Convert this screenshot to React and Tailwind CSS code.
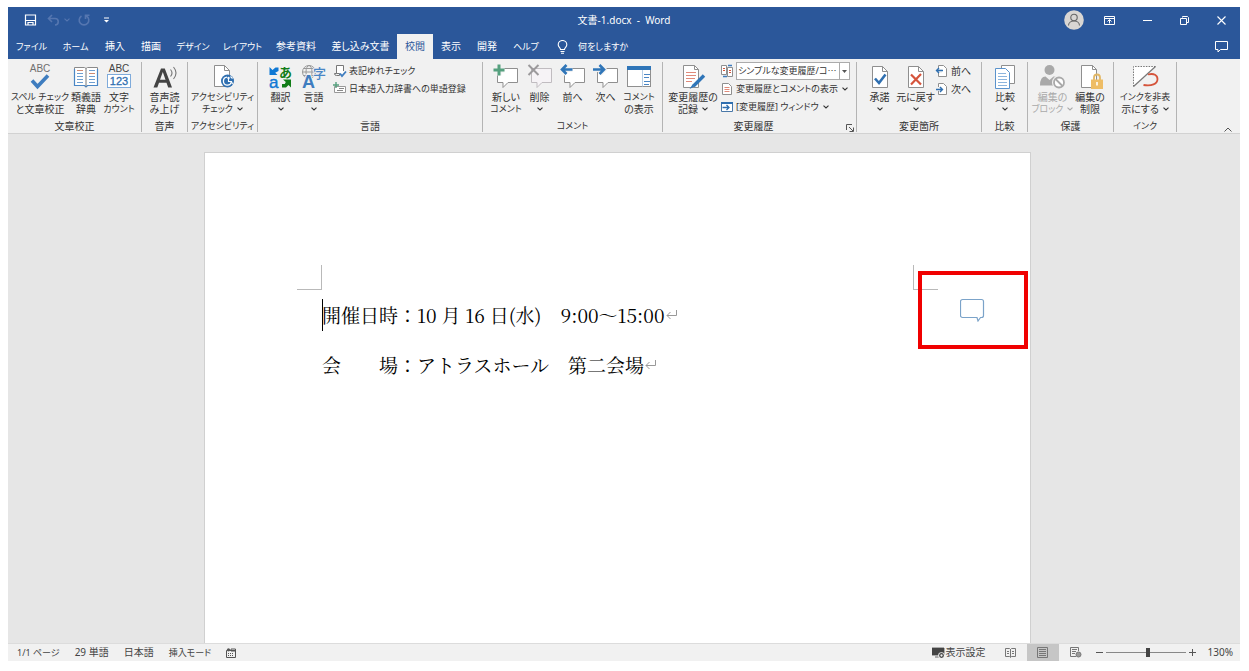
import clsx from 'clsx';

const TABS = [
  { label: 'ファイル', width: 'w-[45px]' },
  { label: 'ホーム', width: 'w-[43px]' },
  { label: '挿入', width: 'w-[36px]' },
  { label: '描画', width: 'w-[36px]' },
  { label: 'デザイン', width: 'w-[48px]' },
  { label: 'レイアウト', width: 'w-[51px]' },
  { label: '参考資料', width: 'w-[56px]' },
  { label: '差し込み文書', width: 'w-[73px]' },
  { label: '校閲', width: 'w-[36px]', active: true },
  { label: '表示', width: 'w-[36px]' },
  { label: '開発', width: 'w-[36px]' },
  { label: 'ヘルプ', width: 'w-[42px]' },
];

const labelSize = text => (/[ァ-ヶ]/.test(text) || text.length > 10 ? 'text-[9px]' : 'text-[10px]');

function Chevron({ className }) {
  return (
    <svg className={clsx('inline-block shrink-0', className)} width="6" height="4" viewBox="0 0 6 4" fill="none" stroke="currentColor" strokeWidth="1.1">
      <path d="M0.5 0.6 3 3 5.5 0.6" />
    </svg>
  );
}

/* ---------- large icons ---------- */

function SpellIcon() {
  return (
    <svg className="overflow-visible font-['Liberation_Sans',sans-serif]" width="24" height="26" viewBox="0 0 24 26">
      <text x="12" y="8" textAnchor="middle" fontSize="10" fill="#6f6f6f">ABC</text>
      <path d="M4 16.500 9.500 22.500 20 11.500" fill="none" stroke="#3f7dbf" strokeWidth="3.600" />
    </svg>
  );
}

function ThesaurusIcon() {
  return (
    <svg width="26" height="24" viewBox="0 0 26 24">
      <path d="M1.500 2.500h10l1.500 1 1.500-1h10v18h-10l-1.500 1.500-1.500-1.500h-10z" fill="#fff" stroke="#8a8a8a" />
      <path d="M1.500 4v16.500h10l1.500 1.500 1.500-1.500h10V4" fill="none" stroke="#4a86c5" strokeWidth="1.200" />
      <path d="M13 3.500v18" stroke="#777" />
      <path d="M4 8.500h6M4 11.500h6M4 14.500h6M4 17.500h6M16 5.500h6M16 11.500h6M16 14.500h6M16 17.500h6" stroke="#6f9fd0" />
      <path d="M4 5.500h6M16 8.500h6" stroke="#d08a70" />
    </svg>
  );
}

function WordCountIcon() {
  return (
    <svg className="overflow-visible font-['Liberation_Sans',sans-serif]" width="26" height="26" viewBox="0 0 26 26">
      <text x="13" y="8" textAnchor="middle" fontSize="10" fill="#444">ABC</text>
      <rect x="1.500" y="10.500" width="23" height="13" fill="#fff" stroke="#7fabdb" />
      <text x="13" y="21" textAnchor="middle" fontSize="11" fill="#2f6fb0" stroke="#2f6fb0" strokeWidth="0.300">123</text>
    </svg>
  );
}

function ReadAloudIcon() {
  return (
    <svg width="28" height="26" viewBox="0 0 28 26">
      <path fillRule="evenodd" d="M2.500 23.500 10 4.500h3.800L21 23.500h-3.800l-1.700-4.800H8L6.300 23.500zM9 15.700h5.500L11.800 8z" fill="#444" />
      <path d="M19.500 5.500q3 3.500 0 7M22.500 3q5 6 0 12" fill="none" stroke="#777" strokeWidth="1.100" />
    </svg>
  );
}

function AccessibilityIcon() {
  return (
    <svg width="24" height="26" viewBox="0 0 24 26">
      <path d="M3.500 1.500h10l5 5v16h-15z" fill="#fff" stroke="#8f8f8f" />
      <path d="M13.500 1.500v5h5" fill="none" stroke="#8f8f8f" />
      <circle cx="16.500" cy="17" r="6.500" fill="#2f6fb0" />
      <path d="M16 13.200a4 4 0 1 0 4.300 5" fill="none" stroke="#fff" strokeWidth="1.300" />
      <circle cx="17.500" cy="14" r="1.200" fill="#fff" />
      <path d="M17.500 15v2.500h3l1 2.500M19.500 12.500l2 2" fill="none" stroke="#fff" strokeWidth="1.100" />
    </svg>
  );
}

function TranslateIcon() {
  return (
    <svg className="overflow-visible" width="24" height="26" viewBox="0 0 24 26">
      <path d="M0.500 3v8h8L6.200 8.700 9.500 7V3.500H6.500L3.500 6z" fill="#0f78d4" />
      <text x="0" y="24" fontSize="17" fill="#0f78d4" className="font-['Liberation_Sans',sans-serif]" stroke="#0f78d4" strokeWidth="0.400">a</text>
      <text x="10" y="12.500" fontSize="13" fontWeight="700" fill="#117d18">あ</text>
      <path d="M14 15.500h8v8L19.500 21 17 23.500h-4V20h2.800l1-2z" fill="#117d18" />
    </svg>
  );
}

function LanguageIcon() {
  return (
    <svg className="overflow-visible" width="26" height="26" viewBox="0 0 26 26">
      <g fill="none" stroke="#999">
        <circle cx="8" cy="8" r="6.500" />
        <ellipse cx="8" cy="8" rx="3" ry="6.500" />
        <path d="M1.500 8h13M2.500 4.500h11M2.500 11.500h11" />
      </g>
      <text x="12" y="14" fontSize="13" fontWeight="500" fill="#4a86c5" stroke="#f1f1f1" strokeWidth="1.500" paintOrder="stroke">字</text>
      <text x="1" y="24" fontSize="18" fontWeight="700" fill="#3f7dbf" stroke="#f1f1f1" strokeWidth="2" paintOrder="stroke" className="font-['Liberation_Sans',sans-serif]">A</text>
    </svg>
  );
}

const BUBBLE = 'M4.500 4.500h20v14H15l-5 5v-5H4.500z';

function CommentIcon({ kind }) {
  const muted = kind === 'delete';
  return (
    <svg width="26" height="26" viewBox="0 0 26 26">
      <path d={BUBBLE} fill={muted ? '#f6f3f6' : '#fff'} stroke={muted ? '#c0bcc0' : '#8f8f8f'} />
      {kind === 'new' && <path d="M6 0.500v11M0.500 6h11" stroke="#f1f1f1" strokeWidth="5" />}
      {kind === 'new' && <path d="M6 0.500v11M0.500 6h11" stroke="#55a07e" strokeWidth="3" />}
      {kind === 'delete' && <path d="M1.500 1 11.500 11M11.500 1 1.500 11" stroke="#9c9a9c" strokeWidth="2" />}
      {kind === 'prev' && <path d="M1 5.500h11.500M6 1 1.500 5.500 6 10" fill="none" stroke="#f1f1f1" strokeWidth="5" />}
      {kind === 'prev' && <path d="M2 5.500h10.500M6.500 1 2 5.500 6.500 10" fill="none" stroke="#2f75b8" strokeWidth="2.600" />}
      {kind === 'next' && <path d="M0 5.500h11M6.500 1 11 5.500 6.500 10" fill="none" stroke="#f1f1f1" strokeWidth="5" />}
      {kind === 'next' && <path d="M0 5.500h11M6.500 1 11 5.500 6.500 10" fill="none" stroke="#2f75b8" strokeWidth="2.600" />}
    </svg>
  );
}

function ShowCommentsIcon() {
  return (
    <svg width="26" height="26" viewBox="0 0 26 26">
      <rect x="1.500" y="2.500" width="23" height="20" fill="#fff" stroke="#8f8f8f" />
      <path d="M1 2h24v4H1z" fill="#2f75b8" />
      <path d="M16.500 6v16.500" stroke="#b8cfe6" />
      <path d="M18 10.500h6M18 13.500h5M18 17.500h6M18 20.500h5" stroke="#4a86c5" />
    </svg>
  );
}

function TrackIcon() {
  return (
    <svg width="26" height="26" viewBox="0 0 26 26">
      <path d="M3.500 1.500h11l4 4v18h-15z" fill="#fff" stroke="#8f8f8f" />
      <path d="M14.500 1.500v4h4" fill="none" stroke="#8f8f8f" />
      <path d="M6 8.500h10M6 11.500h10M6 14.500h9M6 17.500h6" stroke="#e08a7a" />
      <path d="M24 11.500 13.500 22" stroke="#2f75b8" strokeWidth="3.400" />
      <path d="M12.500 20.500 9.500 25l5-2.500z" fill="#2f75b8" />
    </svg>
  );
}

function DecisionIcon({ reject }) {
  return (
    <svg width="20" height="26" viewBox="0 0 20 26">
      <path d="M2.500 2.500h10l5 5v16h-15z" fill="#fff" stroke="#8f8f8f" />
      <path d="M12.500 2.500v5h5" fill="none" stroke="#8f8f8f" />
      {reject
        ? <path d="M5 10.500 15 20.500M15 10 5 20.500" stroke="#d5543b" strokeWidth="2.200" />
        : <path d="M5 14.500 9 19 15.500 10.500" fill="none" stroke="#2f6fb0" strokeWidth="2.600" />}
    </svg>
  );
}

function CompareIcon() {
  return (
    <svg width="22" height="26" viewBox="0 0 22 26">
      <path d="M7.500 1.500h13v18h-13z" fill="#fff" stroke="#8f8f8f" />
      <path d="M1.500 4.500h10l4 4v16h-14z" fill="#fff" stroke="#5b93cc" />
      <path d="M4 9.500h8M4 12.500h9M4 15.500h9M4 18.500h9M4 21.500h9" stroke="#8db5dd" />
    </svg>
  );
}

function BlockAuthorsIcon() {
  return (
    <svg width="28" height="26" viewBox="0 0 28 26">
      <circle cx="10.500" cy="6" r="5" fill="#a9a9a9" />
      <path d="M1 21.500q0-9 5.500-9l4 3.500 4-3.500q4 0 5 3v6z" fill="#a9a9a9" />
      <circle cx="20" cy="18.500" r="7" fill="#f1f1f1" />
      <circle cx="20" cy="18.500" r="5" fill="#fff" stroke="#a9a9a9" strokeWidth="1.800" />
      <path d="M16.500 15 23.500 22" stroke="#a9a9a9" strokeWidth="1.800" />
    </svg>
  );
}

function RestrictIcon() {
  return (
    <svg width="26" height="26" viewBox="0 0 26 26">
      <path d="M4.500 1.500h11l4 4v18h-15z" fill="#fff" stroke="#8f8f8f" />
      <path d="M15.500 1.500v4h4" fill="none" stroke="#8f8f8f" />
      <path d="M17 16v-2.500a3 3 0 0 1 6 0V16" fill="none" stroke="#e2b765" strokeWidth="1.800" />
      <rect x="14" y="15.500" width="12" height="9.500" fill="#eebd66" />
      <path d="M20 18v3.500" stroke="#fff" strokeWidth="1.600" />
    </svg>
  );
}

function HideInkIcon() {
  return (
    <svg width="28" height="26" viewBox="0 0 28 26">
      <path d="M2.500 2.500h22L2.500 22.500z" fill="#fff" />
      <path d="M24.500 2.500h-22v20" fill="none" stroke="#777" strokeDasharray="1.500 1.200" />
      <path d="M24.500 2.500 2.500 22.500" stroke="#777" strokeWidth="1.200" />
      <path d="M17 10.500c6-1.500 9.500 0.500 9.500 4.500 0 5-6 7.500-14 6" fill="none" stroke="#d5543b" strokeWidth="1.800" />
    </svg>
  );
}

/* ---------- small icons ---------- */

function VariantCheckIcon() {
  return (
    <svg width="14" height="14" viewBox="0 0 14 14">
      <path d="M3.500 1.500h7v8h-7z" fill="#fff" />
      <path d="M10.500 7V1.500h-7v8H1.500q0 2 2 2h3v-2h-3" fill="none" stroke="#777" />
      <path d="M7 9.500 9 12l4-4.500" fill="none" stroke="#3f7dbf" strokeWidth="1.800" />
    </svg>
  );
}

function DictionaryIcon() {
  return (
    <svg width="14" height="14" viewBox="0 0 14 14">
      <path d="M1.500 4.500h11v6h-11z" fill="#fff" stroke="#999" />
      <path d="M4 8.500h6M6 6.500h5" stroke="#888" />
      <path d="M3 0v6M0 3h6" stroke="#55a07e" strokeWidth="1.400" />
    </svg>
  );
}

function MarkupIcon({ kind }) {
  return (
    <svg width="14" height="14" viewBox="0 0 14 14">
      {kind === 'display' && (
        <>
          <path d="M1.500 1.500h5v9h-5zM7.500 3.500h5v9h-5z" fill="#fff" stroke="#8f8f8f" />
          <path d="M3 4.500h2M3 6.500h2M9 6.500h2M9 8.500h2" stroke="#d5543b" />
          <path d="M8 1.500h4M3 12.500h4" stroke="#3f7dbf" strokeWidth="1.500" />
        </>
      )}
      {kind === 'show' && (
        <>
          <path d="M2.500 1.500h6l3 3v8h-9z" fill="#fff" stroke="#8f8f8f" />
          <path d="M4.500 5.500h5M4.500 7.500h5M4.500 9.500h5" stroke="#e08a7a" />
        </>
      )}
      {kind === 'pane' && (
        <>
          <path d="M1.500 2.500h11v9h-11z" fill="#fff" stroke="#4a78a8" />
          <path d="M1 3h12" stroke="#2f6fb0" strokeWidth="2" />
          <path d="M2.500 7.500h6M6.500 5 9 7.500 6.500 10" fill="none" stroke="#2f6fb0" strokeWidth="1.300" />
        </>
      )}
    </svg>
  );
}

function StepIcon({ next }) {
  return (
    <svg width="14" height="14" viewBox="0 0 14 14">
      <path d="M3.500 1.500h5l3 3v8h-8z" fill="#fff" stroke="#8f8f8f" />
      <path d="M0 7h7" stroke="#f1f1f1" strokeWidth="4" />
      <path d={next ? 'M1 7.500h6.500M5 5l2.500 2.500L5 10' : 'M8 6.500H1.500M4 4 1.500 6.500 4 9'} fill="none" stroke="#2f6fb0" strokeWidth="1.400" />
    </svg>
  );
}

/* ---------- ribbon pieces ---------- */

function BigButton({ icon, lines, chevron, width, disabled }) {
  const inline = chevron && lines.length > 1;
  return (
    <button
      type="button"
      disabled={disabled}
      className={clsx('flex shrink-0 flex-col items-center whitespace-nowrap', width, disabled && 'text-[#a9a9a9]')}
    >
      <span className="flex h-[29px] items-center">{icon}</span>
      {lines.map((line, i) => (
        <span key={line} className={clsx('flex items-center leading-3', labelSize(line))}>
          {line}
          {inline && i === lines.length - 1 && <Chevron className="ml-1" />}
        </span>
      ))}
      {chevron && !inline && <Chevron className="mt-1" />}
    </button>
  );
}

function SmallButton({ icon, label, chevron }) {
  return (
    <button type="button" className={clsx('flex h-[18px] items-center gap-0.5 whitespace-nowrap', labelSize(label))}>
      {icon}
      <span>{label}</span>
      {chevron && <Chevron className="ml-0.5" />}
    </button>
  );
}

function Group({ label, width, children, launcher }) {
  return (
    <section aria-label={label} className={clsx('flex shrink-0 flex-col justify-between border-r border-[#b4b4b4]', width)}>
      <div className="flex">{children}</div>
      <div className={clsx('relative text-center leading-3 whitespace-nowrap', labelSize(label), launcher && 'pr-3')}>
        {label}
        {launcher && (
          <button type="button" aria-label={`${label}のオプション`} className="absolute right-0.5 bottom-0">
            <svg width="8" height="8" viewBox="0 0 8 8" fill="none" stroke="#555">
              <path d="M0.500 6V0.500H6M3 3l4 4M7.500 3.500v4h-4" />
            </svg>
          </button>
        )}
      </div>
    </section>
  );
}

function TitleBar() {
  return (
    <header className="grid h-[26px] grid-cols-[1fr_auto_1fr] items-center text-white">
      <div className="flex items-center pl-4">
        <button type="button" aria-label="上書き保存">
          <svg width="13" height="12" viewBox="0 0 13 12" fill="none" stroke="#fff" strokeWidth="1.200">
            <path d="M1.500 1h10v10h-10zM1.500 6.500h10M4 11V8.500h5V11" />
          </svg>
        </button>
        <button type="button" aria-label="元に戻す" disabled className="ml-2.5 flex items-center gap-1 text-[#5576b0]">
          <svg width="13" height="12" viewBox="0 0 13 12" fill="none" stroke="currentColor" strokeWidth="1.600">
            <path d="M5 1 1.500 4.500 5 8M1.500 4.500H8a3 3 0 0 1 0 6.500" />
          </svg>
          <Chevron />
        </button>
        <button type="button" aria-label="繰り返し" disabled className="ml-2 text-[#5576b0]">
          <svg width="12" height="12" viewBox="0 0 12 12" fill="none" stroke="currentColor" strokeWidth="1.600">
            <path d="M3.500 2A4.800 4.800 0 1 0 8.500 2M7.500 5V1.200H11.500" />
          </svg>
        </button>
        <button type="button" aria-label="クイック アクセス ツール バーのユーザー設定" className="ml-3.5">
          <svg width="5" height="6" viewBox="0 0 5 6" fill="#fff">
            <path d="M0 0.500h5v1H0zM0 3h5L2.500 5.500z" />
          </svg>
        </button>
      </div>
      <h1 className="whitespace-pre">文書-1.docx  -  Word</h1>
      <div className="flex items-center justify-end pr-3.5">
        <button type="button" aria-label="アカウント" className="mr-5">
          <svg width="20" height="20" viewBox="0 0 20 20" fill="none" stroke="#666" strokeWidth="1.100">
            <circle cx="10" cy="10" r="9.800" fill="#d9d6d3" stroke="none" />
            <circle cx="10" cy="7.500" r="3.200" />
            <path d="M4.500 15.500c0-6 11-6 11 0" />
          </svg>
        </button>
        <button type="button" aria-label="リボンの表示オプション" className="mr-7">
          <svg width="11" height="9" viewBox="0 0 11 9" fill="none" stroke="#fff">
            <path d="M0.500 0.500h10v8h-10zM0.500 2.500h10M5.500 7.500v-3.500M3.500 5.500l2-2 2 2" />
          </svg>
        </button>
        <button type="button" aria-label="最小化" className="mr-7">
          <svg width="9" height="9" viewBox="0 0 9 9" stroke="#fff"><path d="M0 4.500h9" /></svg>
        </button>
        <button type="button" aria-label="元のサイズに戻す" className="mr-7">
          <svg width="9" height="9" viewBox="0 0 9 9" fill="none" stroke="#fff">
            <path d="M2.500 1.500V0.500h5l1 1v5h-1.500M0.500 2.500h6v6h-6z" />
          </svg>
        </button>
        <button type="button" aria-label="閉じる">
          <svg width="9" height="9" viewBox="0 0 9 9" stroke="#fff" strokeWidth="1.100"><path d="M0.500 0.500 8.500 8.500M8.500 0.500 0.500 8.500" /></svg>
        </button>
      </div>
    </header>
  );
}

function TabBar() {
  return (
    <nav className="flex h-[26px] items-end pl-px text-white">
      {TABS.map(tab => (
        <button
          key={tab.label}
          type="button"
          className={clsx(
            'flex h-[25px] shrink-0 items-center justify-center whitespace-nowrap',
            labelSize(tab.label),
            tab.width,
            tab.active && 'bg-[#f1f1f1] text-[#2b579a]'
          )}
        >
          {tab.label}
        </button>
      ))}
      <label className="ml-2.5 flex h-[25px] items-center gap-2.5">
        <svg width="11" height="14" viewBox="0 0 11 14" fill="none" stroke="#fff" strokeWidth="1.100">
          <path d="M3.500 9.500C3.500 7.500 1.200 7 1.200 4.800a4.300 4.300 0 0 1 8.600 0C9.800 7 7.500 7.500 7.500 9.500zM3.500 11.500h4M4 13.300h3" />
        </svg>
        <input aria-label="何をしますか" placeholder="何をしますか" className="w-24 bg-transparent text-[9px] outline-none placeholder:text-white" />
      </label>
      <button type="button" aria-label="コメント" className="ml-auto mr-3 flex h-[25px] items-center">
        <svg width="13" height="12" viewBox="0 0 13 12" fill="none" stroke="#fff">
          <path d="M0.500 0.500h12v8h-7l-2.500 2.500v-2.500h-2.500z" />
        </svg>
      </button>
    </nav>
  );
}

function Ribbon() {
  return (
    <div className="flex h-[75px] border-b border-[#d2d2d2] bg-[#f1f1f1] pt-[3px] pb-px text-[#333]">
      <Group label="文章校正" width="w-[134px]">
        <BigButton icon={<SpellIcon />} lines={['スペル チェック', 'と文章校正']} width="ml-0.5 w-[60px]" />
        <BigButton icon={<ThesaurusIcon />} lines={['類義語', '辞典']} width="w-[32px]" />
        <BigButton icon={<WordCountIcon />} lines={['文字', 'カウント']} width="w-[34px]" />
      </Group>
      <Group label="音声" width="w-[46px]">
        <BigButton icon={<ReadAloudIcon />} lines={['音声読', 'み上げ']} width="w-[45px]" />
      </Group>
      <Group label="アクセシビリティ" width="w-[70px]">
        <BigButton icon={<AccessibilityIcon />} lines={['アクセシビリティ', 'チェック']} chevron width="w-[69px]" />
      </Group>
      <Group label="言語" width="w-[225px]">
        <BigButton icon={<TranslateIcon />} lines={['翻訳']} chevron width="ml-1.5 w-[33px]" />
        <BigButton icon={<LanguageIcon />} lines={['言語']} chevron width="w-[33px]" />
        <div className="ml-[3px]">
          <SmallButton icon={<VariantCheckIcon />} label="表記ゆれチェック" />
          <SmallButton icon={<DictionaryIcon />} label="日本語入力辞書への単語登録" />
        </div>
      </Group>
      <Group label="コメント" width="w-[180px]">
        <BigButton icon={<CommentIcon kind="new" />} lines={['新しい', 'コメント']} width="ml-1.5 w-[34px]" />
        <BigButton icon={<CommentIcon kind="delete" />} lines={['削除']} chevron width="w-[33px]" />
        <BigButton icon={<CommentIcon kind="prev" />} lines={['前へ']} width="w-[33px]" />
        <BigButton icon={<CommentIcon kind="next" />} lines={['次へ']} width="w-[33px]" />
        <BigButton icon={<ShowCommentsIcon />} lines={['コメント', 'の表示']} width="w-[34px]" />
      </Group>
      <Group label="変更履歴" width="w-[194px]" launcher>
        <BigButton icon={<TrackIcon />} lines={['変更履歴の', '記録']} chevron width="ml-[3px] w-[54px]" />
        <div>
          <label className="flex h-[18px] items-center gap-0.5">
            <MarkupIcon kind="display" />
            <span className="relative flex">
              <select aria-label="変更内容の表示" className="h-[18px] w-[114px] appearance-none border border-[#ababab] bg-white pl-px text-[9px]">
                <option>シンプルな変更履歴/コ⋯</option>
              </select>
              <span className="pointer-events-none absolute right-0 flex h-full w-[11px] items-center justify-center border border-[#ababab] bg-white">
                <svg width="5" height="3" viewBox="0 0 5 3" fill="#555"><path d="M0 0h5L2.500 3z" /></svg>
              </span>
            </span>
          </label>
          <SmallButton icon={<MarkupIcon kind="show" />} label="変更履歴とコメントの表示" chevron />
          <SmallButton icon={<MarkupIcon kind="pane" />} label="[変更履歴] ウィンドウ" chevron />
        </div>
      </Group>
      <Group label="変更箇所" width="w-[125px]">
        <BigButton icon={<DecisionIcon />} lines={['承諾']} chevron width="ml-1.5 w-[33px]" />
        <BigButton icon={<DecisionIcon reject />} lines={['元に戻す']} chevron width="w-[39px]" />
        <div>
          <SmallButton icon={<StepIcon />} label="前へ" />
          <SmallButton icon={<StepIcon next />} label="次へ" />
        </div>
      </Group>
      <Group label="比較" width="w-[46px]">
        <BigButton icon={<CompareIcon />} lines={['比較']} chevron width="w-[46px]" />
      </Group>
      <Group label="保護" width="w-[86px]">
        <BigButton icon={<BlockAuthorsIcon />} lines={['編集の', 'ブロック']} chevron disabled width="ml-1 w-[41px]" />
        <BigButton icon={<RestrictIcon />} lines={['編集の', '制限']} width="w-[34px]" />
      </Group>
      <Group label="インク" width="w-[63px]">
        <BigButton icon={<HideInkIcon />} lines={['インクを非表', '示にする']} chevron width="w-[62px]" />
      </Group>
      <button type="button" aria-label="リボンを折りたたむ" className="ml-auto mr-2 self-end">
        <svg width="8" height="5" viewBox="0 0 8 5" fill="none" stroke="#555"><path d="M0.500 4.500 4 1l3.500 3.500" /></svg>
      </button>
    </div>
  );
}

function ReturnMark() {
  return (
    <svg className="ml-px" width="12" height="10" viewBox="0 0 12 10" fill="none" stroke="#999">
      <path d="M10.500 0v5.500H1M4.500 2 1 5.500 4.500 9" />
    </svg>
  );
}

function DocumentPage() {
  return (
    <main className="min-h-0 flex-1 overflow-hidden bg-[#e6e6e6] pt-[18px] pr-[13px]">
      <article className="relative mx-auto h-full w-[827px] max-w-full border border-b-0 border-[#d0d0d0] bg-white pt-28 font-['Noto_Serif_CJK_JP','Liberation_Serif','Noto_Sans_CJK_JP',serif] text-[19px] text-black [font-feature-settings:normal]">
        <div className="flex justify-between px-[92px]">
          <span className="size-[25px] border-r border-b border-[#b9b9b9]" />
          <span className="size-[25px] border-b border-l border-[#b9b9b9]" />
        </div>
        <div className="pl-[117px] leading-[50px] whitespace-pre">
          <p className="flex items-center">
            <span className="-mr-px h-8 w-px bg-black" />
            開催日時：10 月 16 日(水)　9:00～15:00
            <ReturnMark />
          </p>
          <p className="flex items-center">
            会　　場：アトラスホール　第二会場
            <ReturnMark />
          </p>
        </div>
        <button type="button" aria-label="コメントを表示" className="absolute top-[118px] right-0.5 flex h-[78px] w-[110px] items-center justify-center border-4 border-[#f00000]">
          <svg width="26" height="24" viewBox="0 0 26 24">
            <path d="M2.500 1.500h19a2 2 0 0 1 2 2v14a2 2 0 0 1-2 2h-1l-2.500 3.500-1-3.500h-14.500a2 2 0 0 1-2-2v-14a2 2 0 0 1 2-2z" fill="#fff" stroke="#7ba3c9" strokeWidth="1.200" />
          </svg>
        </button>
      </article>
    </main>
  );
}

function StatusBar() {
  return (
    <footer className="flex h-[18px] items-center border-t border-[#dcdcdc] bg-[#f1f1f1] pl-[9px] text-[#444]">
      <div className="flex items-center gap-[15px] whitespace-nowrap">
        <span className="text-[9px]">1/1 ページ</span>
        <span>29 単語</span>
        <span>日本語</span>
        <span className="text-[9px]">挿入モード</span>
        <svg width="10" height="10" viewBox="0 0 10 10" fill="none" stroke="#555">
          <path d="M0.500 2.500h9v7h-9zM5 1h4.500v2H5z" />
          <path d="M2 5.500h6M2 7.500h6" strokeDasharray="1 1" />
          <circle cx="2.500" cy="1.800" r="1.600" fill="#555" stroke="none" />
        </svg>
      </div>
      <div className="ml-auto flex h-full items-center pr-[7px]">
        <button type="button" className="flex items-center gap-px whitespace-nowrap">
          <svg width="13" height="12" viewBox="0 0 13 12">
            <path d="M0 1h12v7H0zM3 10h4" fill="#444" stroke="#444" strokeWidth="0.800" />
            <circle cx="9.500" cy="8.500" r="3.300" fill="#f1f1f1" />
            <circle cx="9.500" cy="8.500" r="1.800" fill="none" stroke="#444" strokeWidth="1.300" />
          </svg>
          表示設定
        </button>
        <button type="button" aria-label="閲覧モード" className="ml-[9px] flex h-full w-[32px] items-center justify-center">
          <svg width="11" height="10" viewBox="0 0 11 10" fill="none" stroke="#777">
            <path d="M0.500 0.500h4l1 1 1-1h4v8h-4l-1 1-1-1h-4zM5.500 1v8M2 3.500h2M2 5.500h2M7 3.500h2M7 5.500h2" />
          </svg>
        </button>
        <button type="button" aria-label="印刷レイアウト" className="flex h-full w-[32px] items-center justify-center bg-[#c6c6c6]">
          <svg width="11" height="11" viewBox="0 0 11 11" fill="none" stroke="#777">
            <path d="M0.500 0.500h10v10h-10zM2 2.500h7M2 4.500h7M2 6.500h7M2 8.500h7" />
          </svg>
        </button>
        <button type="button" aria-label="Web レイアウト" className="flex h-full w-[34px] items-center justify-center">
          <svg width="12" height="11" viewBox="0 0 12 11" fill="none" stroke="#777">
            <path d="M6 9.500H0.500v-9h8V4M2 2.500h5M2 4.500h4M2 6.500h3" />
            <circle cx="8.500" cy="7.500" r="2.500" fill="#999" />
          </svg>
        </button>
        <button type="button" aria-label="縮小" className="ml-[3px]">
          <svg width="7" height="7" viewBox="0 0 7 7" stroke="#555"><path d="M0 3.500h7" /></svg>
        </button>
        <input
          type="range"
          aria-label="ズーム"
          min="10"
          max="200"
          defaultValue="112"
          className="mx-[3px] h-[9px] w-20 appearance-none bg-[linear-gradient(#888,#888)] bg-[length:100%_1px] bg-center bg-no-repeat [&::-webkit-slider-thumb]:h-[9px] [&::-webkit-slider-thumb]:w-1 [&::-webkit-slider-thumb]:appearance-none [&::-webkit-slider-thumb]:bg-[#444]"
        />
        <button type="button" aria-label="拡大">
          <svg width="7" height="7" viewBox="0 0 7 7" stroke="#555"><path d="M0 3.500h7M3.500 0v7" /></svg>
        </button>
        <span className="ml-3">130%</span>
      </div>
    </footer>
  );
}

export default function App() {
  return (
    <div
      lang="ja"
      className="flex h-screen flex-col overflow-hidden bg-white pt-[7px] pr-[9px] pb-[10px] pl-2 font-['Noto_Sans','Noto_Sans_CJK_JP',sans-serif] text-[10px] [font-feature-settings:'palt']"
    >
      <div className="bg-[#2b579a]">
        <TitleBar />
        <TabBar />
      </div>
      <Ribbon />
      <DocumentPage />
      <StatusBar />
    </div>
  );
}
